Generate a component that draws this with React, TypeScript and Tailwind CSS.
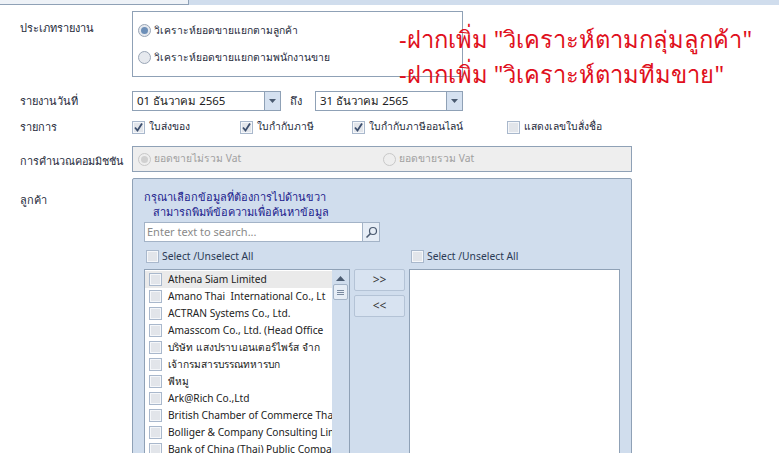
import React from "react";

const font = { fontFamily: '"Noto Sans","DejaVu Sans","Liberation Sans",sans-serif' };

function Check({ checked = false, className = "" }: { checked?: boolean; className?: string }) {
  return (
    <span className={`flex h-[13px] w-[13px] shrink-0 items-center justify-center border border-[#a9b8cc] bg-[#e2e5ea] shadow-[inset_0_0_0_1px_#f5f7fa] ${className}`}>
      {checked && (
        <svg width="11" height="11" viewBox="0 0 11 11">
          <path d="M2 5.5 L4.5 8.5 L9 1.5" fill="none" stroke="#3c4f6e" strokeWidth="1.8" />
        </svg>
      )}
    </span>
  );
}

function Radio({ on = false, disabled = false }: { on?: boolean; disabled?: boolean }) {
  return (
    <span className={`flex h-[13px] w-[13px] shrink-0 items-center justify-center rounded-full border ${disabled ? "border-[#c8c8c8] bg-[#eeeeee]" : "border-[#9aa6b6] bg-[#e6e9ee]"}`}>
      {on && <span className={`h-[7px] w-[7px] rounded-full ${disabled ? "bg-[#d0d0d0]" : "bg-[#6d8fb8]"}`} />}
    </span>
  );
}

function DateBox({ value, w }: { value: string; w: string }) {
  return (
    <div className={`flex h-[20px] items-stretch border border-[#8fa1b6] bg-white ${w}`}>
      <div className="flex-1 pl-[4px] text-[11.5px] leading-[18px] text-[#222]">{value}</div>
      <div className="flex w-[16px] items-center justify-center border-l border-[#8fa1b6] bg-[#d5e1f0]">
        <svg width="7" height="4" viewBox="0 0 7 4"><path d="M0 0H7L3.5 4Z" fill="#4a5a70" /></svg>
      </div>
    </div>
  );
}

const items = [
  "Athena Siam Limited",
  "Amano Thai  International Co., Lt",
  "ACTRAN Systems Co., Ltd.",
  "Amasscom Co., Ltd. (Head Office",
  "บริษัท แสงปราบ เอนเตอร์ไพร์ส จำก",
  "เจ้ากรมสารบรรณทหารบก",
  "พีหมู",
  "Ark@Rich Co.,Ltd",
  "British Chamber of Commerce Tha",
  "Bolliger & Company Consulting Lim",
  "Bank of China (Thai) Public Compa",
];

export default function App() {
  return (
    <div className="relative h-[453px] w-[779px] overflow-hidden bg-white text-[10.3px] text-[#1e2a3a]" style={font}>
      <div className="h-[5px] bg-[#d0dded]">
        <div className="h-[5px] w-[189px] border-r border-b border-[#8fa1b6] bg-[#eef2f7]" />
      </div>

      <div className="flex flex-col pl-[20px]">
        <div className="mt-[6px] flex">
          <div className="w-[112px] pt-[9px] text-[11px]">ประเภทรายงาน</div>
          <div className="flex h-[66px] w-[331px] flex-col gap-[10px] border border-[#8fa1b6] px-[5px] pt-[10px]">
            <label className="flex h-[17px] items-center gap-[3px]"><Radio on />วิเคราะห์ยอดขายแยกตามลูกค้า</label>
            <label className="flex h-[17px] items-center gap-[3px]"><Radio />วิเคราะห์ยอดขายแยกตามพนักงานขาย</label>
          </div>
        </div>

        <div className="mt-[14px] flex h-[20px] items-center">
          <div className="w-[112px] text-[11px]">รายงานวันที่</div>
          <DateBox value="01 ธันวาคม 2565" w="w-[149px]" />
          <div className="w-[34px] pl-[9px] text-[11px]">ถึง</div>
          <DateBox value="31 ธันวาคม 2565" w="w-[148px]" />
        </div>

        <div className="mt-[7px] flex h-[18px] items-center">
          <div className="w-[112px] text-[11px]">รายการ</div>
          <div className="flex w-[108px] items-center gap-[4px]"><Check checked />ใบส่งของ</div>
          <div className="flex w-[112px] items-center gap-[4px]"><Check checked />ใบกำกับภาษี</div>
          <div className="flex w-[155px] items-center gap-[4px]"><Check checked />ใบกำกับภาษีออนไลน์</div>
          <div className="flex items-center gap-[4px]"><Check />แสดงเลขใบสั่งชื่อ</div>
        </div>

        <div className="mt-[10px] flex">
          <div className="w-[112px] pt-[7px] text-[10.8px]">การคำนวณคอมมิชชัน</div>
          <div className="flex h-[26px] w-[500px] items-center border border-[#8fa1b6] bg-[#eeeeee] pl-[5px] text-[#a0a0a0]">
            <div className="flex w-[245px] items-center gap-[3px]"><Radio on disabled />ยอดขายไม่รวม Vat</div>
            <div className="flex items-center gap-[3px]"><Radio disabled />ยอดขายรวม Vat</div>
          </div>
        </div>

        <div className="mt-[6px] flex">
          <div className="w-[112px] pt-[14px] text-[11px]">ลูกค้า</div>
          <div className="flex h-[290px] w-[500px] flex-col rounded-t-[2px] border border-[#8fa1b6] bg-[#d0dded] pl-[11px] pr-[11px]">
            <div className="mt-[11px] text-[11px] leading-[14px] text-[#1a1a8c]">กรุณาเลือกข้อมูลที่ต้องการไปด้านขวา</div>
            <div className="mt-[1px] pl-[9px] text-[11px] leading-[14px] text-[#1a1a8c]">สามารถพิมพ์ข้อความเพื่อค้นหาข้อมูล</div>
            <div className="mt-[3px] flex h-[20px] w-[236px] border border-[#a3b3c7] bg-white">
              <div className="flex-1 pl-[2px] text-[11px] leading-[18px] text-[#8a8a8a]">Enter text to search...</div>
              <div className="flex w-[17px] items-center justify-center border-l border-[#a3b3c7] bg-[#e6edf6]">
                <svg width="13" height="13" viewBox="0 0 13 13" fill="none" stroke="#4a5a70" strokeWidth="1.2">
                  <circle cx="8" cy="5" r="3.5" />
                  <path d="M5.5 7.5 L1.5 11.5" strokeWidth="1.6" />
                </svg>
              </div>
            </div>

            <div className="mt-[7px] flex">
              <div className="flex w-[206px] items-center gap-[3px] pl-[2px] text-[10.3px] text-[#2b3a55]"><Check />Select /Unselect All</div>
              <div className="ml-[59px] flex items-center gap-[3px] pl-[2px] text-[10.3px] text-[#2b3a55]"><Check />Select /Unselect All</div>
            </div>

            <div className="mt-[5px] flex flex-1 items-stretch">
              <div className="flex w-[206px] overflow-hidden border border-[#8fa1b6] bg-white">
                <div className="flex min-w-0 flex-1 flex-col pt-[1px]">
                  {items.map((t, i) => (
                    <div key={t} className={`flex h-[17px] shrink-0 items-center gap-[6px] pl-[4px] text-[10.2px] text-[#222] ${i === 0 ? "bg-[#eaeaea]" : ""}`}>
                      <Check />
                      <span className="whitespace-pre">{t}</span>
                    </div>
                  ))}
                </div>
                <div className="flex w-[17px] shrink-0 flex-col items-center bg-[#d0dded]">
                  <svg className="mt-[6px]" width="9" height="5" viewBox="0 0 9 5"><path d="M0 5H9L4.5 0Z" fill="#4a5a70" /></svg>
                  <div className="mt-[3px] flex h-[16px] w-[15px] items-center justify-center rounded-[2px] border border-[#a3b3c7] bg-[#e6edf6]">
                    <svg width="7" height="5" viewBox="0 0 7 5" stroke="#7a8aa0"><path d="M0 .5H7M0 2.5H7M0 4.5H7" /></svg>
                  </div>
                </div>
              </div>
              <div className="ml-[4px] flex w-[51px] flex-col gap-[4px]">
                <button className="h-[22px] rounded-[2px] border border-[#b4c3d6] bg-[#d8e3f1] text-[12px] text-[#333]">&gt;&gt;</button>
                <button className="h-[22px] rounded-[2px] border border-[#b4c3d6] bg-[#d8e3f1] text-[12px] text-[#333]">&lt;&lt;</button>
              </div>
              <div className="ml-[4px] w-[211px] border border-[#8fa1b6] bg-white" />
            </div>
          </div>
        </div>
      </div>

      <div className="absolute left-[399px] top-[22px] flex flex-col text-[23.7px] leading-[35px] text-[#e0101c]">
        <div className="whitespace-nowrap">-ฝากเพิ่ม "วิเคราะห์ตามกลุ่มลูกค้า"</div>
        <div className="whitespace-nowrap">-ฝากเพิ่ม "วิเคราะห์ตามทีมขาย"</div>
      </div>
    </div>
  );
}
